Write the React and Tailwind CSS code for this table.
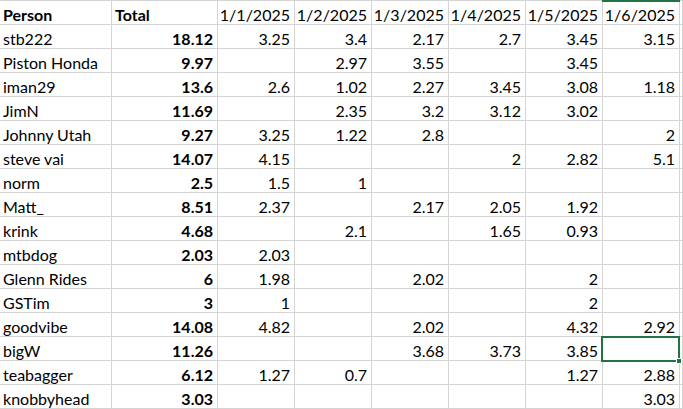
import React from "react";

const dates = ["1/1/2025", "1/2/2025", "1/3/2025", "1/4/2025", "1/5/2025", "1/6/2025"];
const rows = [
  ["stb222", "18.12", "3.25", "3.4", "2.17", "2.7", "3.45", "3.15"],
  ["Piston Honda", "9.97", "", "2.97", "3.55", "", "3.45", ""],
  ["iman29", "13.6", "2.6", "1.02", "2.27", "3.45", "3.08", "1.18"],
  ["JimN", "11.69", "", "2.35", "3.2", "3.12", "3.02", ""],
  ["Johnny Utah", "9.27", "3.25", "1.22", "2.8", "", "", "2"],
  ["steve vai", "14.07", "4.15", "", "", "2", "2.82", "5.1"],
  ["norm", "2.5", "1.5", "1", "", "", "", ""],
  ["Matt_", "8.51", "2.37", "", "2.17", "2.05", "1.92", ""],
  ["krink", "4.68", "", "2.1", "", "1.65", "0.93", ""],
  ["mtbdog", "2.03", "2.03", "", "", "", "", ""],
  ["Glenn Rides", "6", "1.98", "", "2.02", "", "2", ""],
  ["GSTim", "3", "1", "", "", "", "2", ""],
  ["goodvibe", "14.08", "4.82", "", "2.02", "", "4.32", "2.92"],
  ["bigW", "11.26", "", "", "3.68", "3.73", "3.85", ""],
  ["teabagger", "6.12", "1.27", "0.7", "", "", "1.27", "2.88"],
  ["knobbyhead", "3.03", "", "", "", "", "", "3.03"],
];

const cell = "h-[24px] border-r border-b border-[#d4d4d4] flex items-end pb-[1px] leading-none whitespace-nowrap overflow-hidden";

export default function App() {
  return (
    <div
      className="w-[683px] h-[409px] overflow-hidden bg-white text-black text-[16px]"
      style={{ fontFamily: "Lato, 'Liberation Sans', sans-serif" }}
    >
      <div className="grid grid-cols-[112px_106px_77px_77px_77px_77px_77px_77px_1fr] border-t border-[#d4d4d4]">
        <div className={`${cell} pl-[3px] font-bold`}>Person</div>
        <div className={`${cell} pl-[3px] font-bold`}>Total</div>
        {dates.map((d, i) => (
          <div key={d} className={`${cell} justify-end pr-[4px] relative overflow-visible`}>
            {i === 5 && <div className="absolute left-[-1px] right-[-1px] top-[-1px] h-[2px] bg-[#217346]" />}
            {d}
          </div>
        ))}
        <div className={cell}></div>
        {rows.map((r, ri) => (
          <React.Fragment key={ri}>
            <div className={`${cell} pl-[3px]`}>{r[0]}</div>
            <div className={`${cell} justify-end pr-[4px] font-bold`}>{r[1]}</div>
            {r.slice(2).map((v, ci) => (
              <div key={ci} className={`${cell} justify-end pr-[4px] relative overflow-visible`}>
                {v}
                {ri === 13 && ci === 5 && (
                  <>
                    <div className="absolute left-[-2px] top-[-1px] w-[79px] h-[26px] border-2 border-[#217346] z-10" />
                    <div className="absolute left-[73px] top-[21px] w-[6px] h-[6px] bg-[#217346] border border-white z-20" />
                  </>
                )}
              </div>
            ))}
            <div className={cell}></div>
          </React.Fragment>
        ))}
      </div>
    </div>
  );
}
